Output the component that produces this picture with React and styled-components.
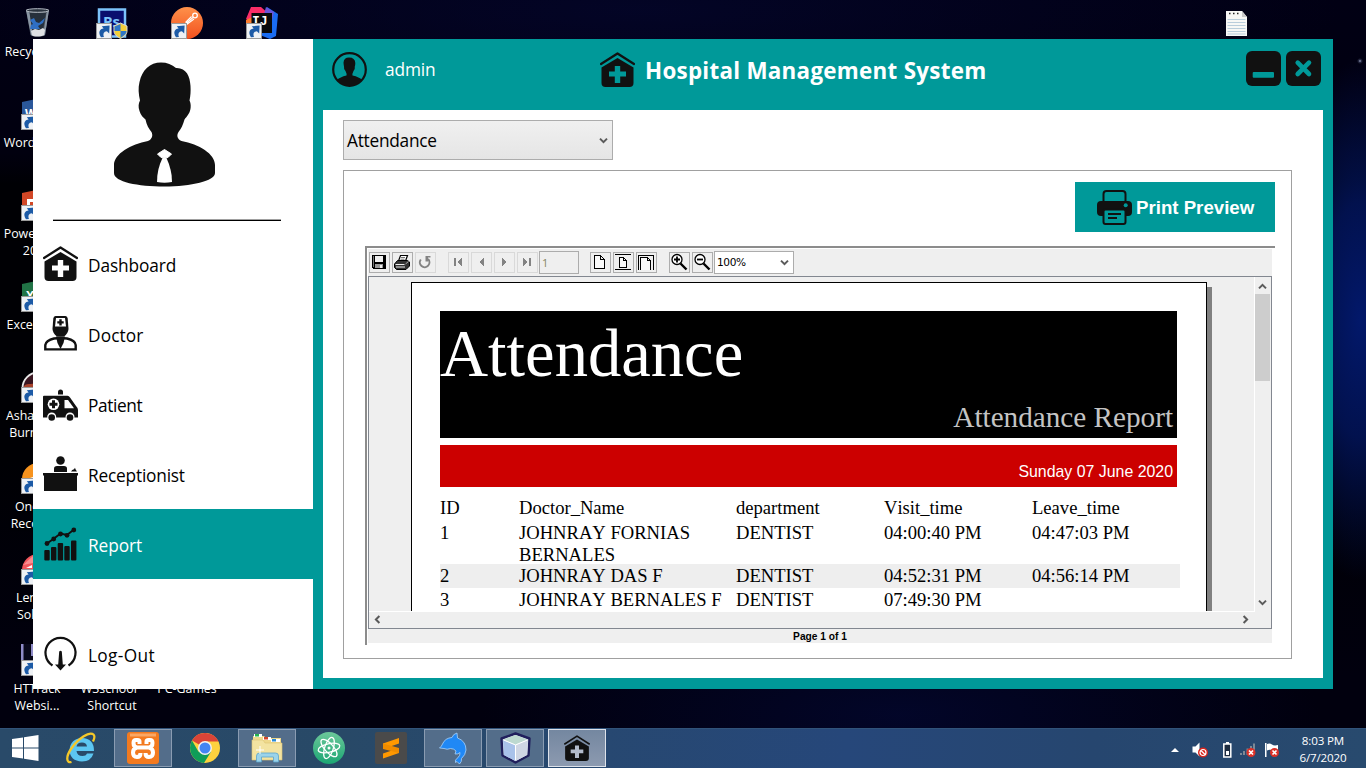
import React from "react";
import styled, { createGlobalStyle, css } from "styled-components";

const TEAL = "#009999";
const INK = "#111111";
const UI = `"Open Sans", "Noto Sans", sans-serif`;

const Global = createGlobalStyle`
  * { box-sizing: border-box; }
  html, body { margin: 0; padding: 0; background: #00000a; }
  svg { display: block; flex: none; }
`;

/* ---------- desktop ---------- */

const Desktop = styled.div`
  position: relative;
  width: 1366px;
  height: 768px;
  overflow: hidden;
  display: flex;
  flex-direction: column;
  padding: 39px 33px 0;
  font-family: ${UI};
  background:
    radial-gradient(circle at 1360px 61px, #9aa3c0 0, rgba(120,130,170,.3) 1.5px, transparent 3px),
    radial-gradient(ellipse 85px 260px at 1360px 320px, #02186a 0%, rgba(2, 19, 86, .9) 45%, transparent 100%),
    radial-gradient(ellipse 420px 130px at 900px 715px, rgba(3, 8, 52, .7), transparent 100%),
    radial-gradient(ellipse 700px 120px at 640px 10px, rgba(4, 6, 44, .75), transparent 100%),
    linear-gradient(180deg, #010014 0, #01000f 20%, #000004 24%, #000004 60%, #01000e 88%, #01000e 100%);
`;

const Shortcut = styled.div`
  position: absolute;
  left: ${(p) => p.$x}px;
  top: ${(p) => p.$y}px;
  width: 74px;
  display: flex;
  flex-direction: column;
  align-items: center;
`;

const Picture = styled.div`
  position: relative;
  width: 32px;
  height: 32px;
  margin-bottom: 4px;
`;

const Overlay = styled.div`
  position: absolute;
  left: 0;
  bottom: 0;
`;

const Caption = styled.div`
  font-size: 12.4px;
  line-height: 17px;
  color: #fff;
  text-align: center;
  white-space: pre;
  text-shadow: 0 1px 2px #000;
`;

const ArrowBadge = () => (
  <Overlay>
    <svg width="16" height="16" viewBox="0 0 16 16">
      <rect x=".5" y=".5" width="15" height="15" fill="#eef1f5" stroke="#9a9a9a" />
      <path d="M5 14.200C1.800 9.500 3.600 6 7.600 5.600L5.800 3.200 13.600 2.600 13.200 10.400 10.900 8.200C7.600 8.400 6.800 11 8 14Z" fill="#1c5aa6" />
    </svg>
  </Overlay>
);

const art = {
  bin: (
    <svg width="32" height="32" viewBox="0 0 32 32">
      <path d="M5 3h23l-4 25c-1 2-13 2-14.500 0Z" fill="#4b545f" />
      <path d="M8 6h17l-3 17H11Z" fill="#26303c" />
      <path d="M5 3l5 25 2 1L8.500 6Z M28 3l-4 25-2 1 3.500-23Z" fill="#8995a3" />
      <ellipse cx="16.500" cy="3.500" rx="11.500" ry="1.800" fill="#2a333e" stroke="#b5bcc5" />
      <path d="M9 13l4-2 2 4 3 1 6-5-2 5-5 3 2 3H9l1-4 2-1Z" fill="#2f6fc4" />
      <path d="M10 24l4-2 4 1 4-2 2 2-1 5c-3 2-11 2-12 0Z" fill="#dfe1e4" />
    </svg>
  ),
  ps: (
    <svg width="32" height="32" viewBox="0 0 32 32">
      <rect x="3" y="2.500" width="26" height="27" fill="#0a0e6e" stroke="#7cc3fb" strokeWidth="2.500" />
      <text x="7" y="20" fontFamily="Open Sans, sans-serif" fontWeight="700" fontSize="15" fill="#7cc3fb">Ps</text>
      <g transform="translate(17 16)">
        <path d="M7.500 0L14 3v5c0 4-4 6-6.500 7.500C5 14 1 12 1 8V3Z" fill="#f3cf3a" stroke="#dadada" />
        <path d="M7.500 1L1.500 3.400V8h6Z M7.500 8h6c0 3-3.500 5.500-6 6.800Z" fill="#2d76c8" />
      </g>
    </svg>
  ),
  postman: (
    <svg width="32" height="32" viewBox="0 0 32 32">
      <defs><linearGradient id="pm" x2="0" y2="1"><stop offset="0" stopColor="#ff914a" /><stop offset="1" stopColor="#f2501e" /></linearGradient></defs>
      <circle cx="16" cy="16" r="16" fill="url(#pm)" />
      <circle cx="24" cy="8.500" r="2.300" fill="none" stroke="#fff" strokeWidth="1.300" />
      <path d="M22 10.500l-8 7 M23 12l-8 6 M20.500 9.500l-6 6" stroke="#fff" strokeWidth="1.100" />
    </svg>
  ),
  idea: (
    <svg width="32" height="32" viewBox="0 0 32 32">
      <path d="M5 0h10l9 8-18 8-6-4Z" fill="#fb2d68" />
      <path d="M21 0l11 7-2 22-6 3-10-4Z" fill="#1a6cf2" />
      <path d="M20 0l8 5-2 8-8-6Z" fill="#6b55d8" />
      <path d="M0 13l6-3v10H0Z" fill="#fc7b2e" />
      <rect x="5.500" y="6" width="20.500" height="20" fill="#0a0a0a" />
      <text x="6" y="18" fontFamily="Liberation Mono, monospace" fontWeight="700" fontSize="13" fill="#fff">IJ</text>
    </svg>
  ),
  word: (<svg width="32" height="32" viewBox="0 0 32 32"><path d="M1 4L20 0v30L1 27Z" fill="#2a579a" /><text x="4" y="20" fontFamily="Open Sans" fontWeight="700" fontSize="12" fill="#fff">W</text></svg>),
  ppt: (<svg width="32" height="32" viewBox="0 0 32 32"><path d="M1 4L20 0v30L1 27Z" fill="#d24726" /><path d="M6 10h8v8H6Z" fill="#fff" /><path d="M9 13h3v3H9Z" fill="#d24726" /></svg>),
  excel: (<svg width="32" height="32" viewBox="0 0 32 32"><path d="M1 4L20 0v30L1 27Z" fill="#217346" /><text x="5" y="20" fontFamily="Open Sans" fontWeight="700" fontSize="12" fill="#fff">X</text></svg>),
  game: (<svg width="32" height="32" viewBox="0 0 32 32"><circle cx="17" cy="17" r="15.500" fill="#3a1520" stroke="#e8e8e8" strokeWidth="1.800" /><path d="M3 15c4-4 8 0 16-5v8H3Z" fill="#a8432c" /></svg>),
  rec: (<svg width="32" height="32" viewBox="0 0 32 32"><circle cx="17" cy="17" r="16" fill="#f7931e" /><path d="M9 16l6-2v3Z" fill="#fff" /></svg>),
  len: (<svg width="32" height="32" viewBox="0 0 32 32"><circle cx="17" cy="17" r="16" fill="#f2565c" /><path d="M2 12l10-9v7Z" fill="#f98d90" /><path d="M5 15l6-3v3Z" fill="#fff" /></svg>),
  httrack: (<svg width="32" height="32" viewBox="0 0 32 32"><rect width="32" height="32" fill="#08081a" /><path d="M0 0h2.500v18H0Z M10 0h3v12h-3Z" fill="#8f8cc8" /></svg>),
  note: (
    <svg width="22" height="27" viewBox="0 0 22 27">
      <path d="M0 1h16l5 6v19H0Z" fill="#f7f7f5" />
      <path d="M16 1l5 6h-5Z" fill="#c9c9c9" />
      <path d="M3 3.500h1.500M7 3.500h1.500M11 3.500h1.500" stroke="#222" strokeWidth="1.500" />
      <path d="M1.500 9.500h18M1.500 12.500h18M1.500 15.500h18M1.500 18.500h18M1.500 21.500h18M1.500 24h18" stroke="#b9cddb" />
    </svg>
  ),
};

const shortcuts = [
  { x: 0, y: 7, pic: "bin", plain: true, lines: ["Recycle Bin"] },
  { x: 75, y: 7, pic: "ps" },
  { x: 150, y: 7, pic: "postman" },
  { x: 225, y: 7, pic: "idea" },
  { x: 0, y: 98, pic: "word", lines: ["Word  2016"] },
  { x: 0, y: 189, pic: "ppt", lines: ["PowerPoint", "2016"] },
  { x: 0, y: 280, pic: "excel", lines: ["Excel 2016"] },
  { x: 0, y: 371, pic: "game", lines: ["Ashampoo", "Burning S"] },
  { x: 0, y: 462, pic: "rec", lines: ["OneClic", "Recorder"] },
  { x: 0, y: 553, pic: "len", lines: ["Lenovo", "Solutio"] },
  { x: 0, y: 644, pic: "httrack", lines: ["HTTrack", "Websi..."] },
  { x: 75, y: 644, lines: ["W3school  ", "Shortcut"] },
  { x: 150, y: 644, lines: ["PC-Games"] },
];

/* ---------- application window ---------- */

const Window = styled.div`
  position: relative;
  display: flex;
  width: 1300px;
  height: 650px;
  flex: none;
  background: ${TEAL};
`;

const Sidebar = styled.aside`
  width: 280px;
  display: flex;
  flex-direction: column;
  background: #fff;
`;

const Profile = styled.div`
  height: 190px;
  display: flex;
  flex-direction: column;
  padding: 23px 32px 8px 20px;
`;

const AvatarBox = styled.div`
  flex: 1;
  padding-left: 61px;
`;

const Rule = styled.div`
  height: 2px;
  border-top: 1px solid #a0a0a0;
  background: #000;
`;

const MenuItem = styled.div`
  height: 70px;
  display: flex;
  align-items: center;
  padding-left: 10px;
  gap: 10px;
  margin-top: ${(p) => p.$gap || 0}px;
  font-size: 17.3px;
  letter-spacing: ${(p) => p.$track || 0}px;
  color: ${(p) => (p.$active ? "#fff" : "#000")};
  background: ${(p) => (p.$active ? TEAL : "transparent")};
  svg { margin-top: -1px; }
  span { margin-top: 2px; }
`;

const Main = styled.main`
  flex: 1;
  display: flex;
  flex-direction: column;
  padding: 0 10px 11px;
`;

const Header = styled.header`
  height: 71px;
  display: flex;
  align-items: flex-start;
  padding: 13px 2px 0 9px;
  color: #fff;
`;

const UserName = styled.div`
  width: 233px;
  padding-left: 18px;
  line-height: 36px;
  font-size: 17.3px;
  letter-spacing: -0.15px;
`;

const Title = styled.h1`
  flex: 1;
  margin: 0;
  padding-left: 10px;
  line-height: 38px;
  font-size: 22.4px;
  letter-spacing: 0.27px;
  font-weight: 700;
  white-space: nowrap;
`;

const WindowButtons = styled.div`
  display: flex;
  gap: 5px;
  margin-top: -1px;
`;

const Content = styled.section`
  flex: 1;
  display: flex;
  flex-direction: column;
  padding: 10px 31px 19px 20px;
  background: #fff;
`;

const ReportSelect = styled.div`
  width: 270px;
  height: 40px;
  flex: none;
  display: flex;
  align-items: center;
  justify-content: space-between;
  padding: 1px 4px 0 3px;
  border: 1px solid #acacac;
  background: linear-gradient(#f0f0f0, #e5e5e5);
  font-size: 17.3px;
  letter-spacing: -0.25px;
  color: #000;
`;

const Panel = styled.div`
  flex: 1;
  margin-top: 10px;
  display: flex;
  flex-direction: column;
  padding: 11px 16px 13px 21px;
  border: 1px solid #a0a0a0;
`;

const PrintButton = styled.div`
  align-self: flex-end;
  width: 200px;
  height: 50px;
  flex: none;
  display: flex;
  align-items: center;
  padding-left: 22px;
  gap: 4px;
  background: ${TEAL};
  color: #fff;
  font: bold 18.67px "Liberation Sans", Arial, sans-serif;
  white-space: nowrap;
  span { margin-top: 2px; }
`;

const Viewer = styled.div`
  margin-top: 14px;
  height: 399px;
  display: flex;
  flex-direction: column;
  padding: 1px 3px 1px 1px;
  border-top: 2px solid #8c8c8c;
  border-left: 2px solid #8c8c8c;
`;

const Toolbar = styled.div`
  height: 27px;
  flex: none;
  display: flex;
  align-items: flex-start;
  gap: 2px;
  padding: 3px 0 0 1px;
  background: #efefef;
`;

const Tool = styled.div`
  width: 21px;
  height: 21px;
  margin-left: ${(p) => p.$gap || 0}px;
  display: flex;
  align-items: center;
  justify-content: center;
  border: 1px solid ${(p) => (p.$off ? "#d9d9d9" : "#adadad")};
  background: #efefef;
  color: ${(p) => (p.$off ? "#838383" : "#000")};
`;

const fieldBox = css`
  margin-top: -1px;
  height: 23px;
  border: 1px solid #acacac;
  font: 11px/21px "DejaVu Sans", sans-serif;
`;

const PageField = styled.div`
  ${fieldBox}
  width: 40px;
  margin-left: -1px;
  padding-left: 2px;
  background: #efefef;
  color: #85855f;
  font-family: ${UI};
`;

const ZoomField = styled.div`
  ${fieldBox}
  width: 80px;
  margin-left: -1px;
  padding: 0 4px 0 2px;
  display: flex;
  align-items: center;
  justify-content: space-between;
  background: #fff;
  font-size: 10.6px;
  letter-spacing: -0.4px;
`;

const Viewport = styled.div`
  height: 353px;
  flex: none;
  display: flex;
  flex-direction: column;
  border: 1px solid #828790;
  background: #efefef;
`;

const ViewRow = styled.div`
  display: flex;
  height: 335px;
`;

const Scroller = styled.div`
  width: 886px;
  height: 335px;
  overflow: hidden;
  padding: 5px 0 0 42px;
  border-right: 1px solid #fff;
  border-bottom: 1px solid #fff;
`;

const VBar = styled.div`
  flex: 1;
  display: flex;
  flex-direction: column;
  align-items: center;
  padding: 5px 1px 5px 0;
`;

const Thumb = styled.div`
  width: 15px;
  height: 87px;
  margin: 3px 0 auto;
  background: #cdcdcd;
`;

const HBar = styled.div`
  flex: 1;
  display: flex;
  justify-content: space-between;
  align-items: center;
  padding: 0 21px 1px 4px;
`;

const Footer = styled.div`
  height: 14px;
  background: #efefef;
  text-align: center;
  font: bold 10.2px/16px "Liberation Sans", Arial, sans-serif;
  color: #000;
`;

/* ---------- report sheet ---------- */

const Sheet = styled.div`
  width: 796px;
  height: 1123px;
  padding: 28px 26px 0 28px;
  background: #fff;
  border: 1px solid #000;
  box-shadow: 5px 5px 0 #808080;
  font-family: "Liberation Serif", "Times New Roman", serif;
  font-kerning: none;
`;

const Banner = styled.div`
  width: 737px;
  height: 127px;
  display: flex;
  flex-direction: column;
  justify-content: space-between;
  padding: 0 4px 4px 0;
  background: #000;
  color: #fff;
`;

const BannerTitle = styled.div`
  font-size: 66.6px;
  line-height: 86px;
  height: 86px;
`;

const BannerSub = styled.div`
  align-self: flex-end;
  font-size: 29.2px;
  line-height: 34px;
  color: #c4c4c4;
`;

const DateStrip = styled.div`
  width: 737px;
  height: 42px;
  margin-top: 7px;
  padding-right: 4px;
  background: #cc0000;
  color: #fff;
  text-align: right;
  font: 15.9px/53px "Liberation Sans", Arial, sans-serif;
`;

const Row = styled.div`
  width: 740px;
  height: ${(p) => p.$h}px;
  margin-top: ${(p) => p.$gap || 0}px;
  padding-top: ${(p) => p.$pad || 0}px;
  display: grid;
  grid-template-columns: 79px 217px 148px 148px 148px;
  font-size: 18.6px;
  line-height: 22px;
  color: #000;
  white-space: pre;
  background: ${(p) => (p.$alt ? "#eeeeee" : "transparent")};
`;

const rows = [
  { h: 24, gap: 10, cells: ["ID", "Doctor_Name", "department", "Visit_time", "Leave_time"] },
  { h: 43, pad: 1, cells: ["1", "JOHNRAY FORNIAS\nBERNALES", "DENTIST", "04:00:40 PM", "04:47:03 PM"] },
  { h: 24, pad: 1, alt: true, cells: ["2", "JOHNRAY DAS F", "DENTIST", "04:52:31 PM", "04:56:14 PM"] },
  { h: 24, pad: 1, cells: ["3", "JOHNRAY BERNALES F", "DENTIST", "07:49:30 PM", ""] },
];

/* ---------- application icons ---------- */

const Chevron = ({ dir = "down", size = 9 }) => {
  const turn = { down: 0, up: 180, left: 90, right: -90 }[dir];
  return (
    <svg width={size} height={size} viewBox="0 0 9 9">
      <path transform={`rotate(${turn} 4.5 4.500)`} d="M1 2.600L4.500 6.100 8 2.600" fill="none" stroke="#5a5a5a" strokeWidth="2" />
    </svg>
  );
};

const Hospital = ({ cross = "#fff", size = 35 }) => (
  <svg width={size} height={size} viewBox="0 0 35 35">
    <path d="M1 12L17.500 1.500 34 12" fill="none" stroke={INK} strokeWidth="2.300" strokeLinecap="round" strokeLinejoin="round" />
    <path d="M17.500 6L33.500 15.500V31q0 4-4 4H5.500q-4 0-4-4V15.500Z" fill={INK} />
    <path d="M14.800 14h5.400v5.600H26v5h-5.800V31h-5.400v-6.400H9v-5h5.800Z" fill={cross} />
  </svg>
);

const Avatar = () => (
  <svg width="101" height="126" viewBox="0 0 101 126">
    <path d="M47 .5C53 .5 58 2.500 62 6C72 5.500 76 14 76.500 24C76.800 29 76.500 34 75.500 38.500C77.500 42 77 49 74.500 52C73 54.500 71.500 56 70.500 57.500C69 63 67 67 64.500 70C62.500 73 63 77 67.500 79C85 82 101 92 101 103V111C101 119 77 124.500 50.500 124.500S0 120 0 111V103C0 92 17 82 34 79C38.500 77 39 73 37.500 70C35 67 32.500 63 31.500 57.500C29.500 56 26.500 53 25.500 49C24 45 24.500 41 26 38.500C24.500 32 24 26 25.500 20C28 8 36 .5 47 .5Z" fill={INK} />
    <path d="M50.500 87.500L57.500 92 54 95.500 50.500 96 47 95.500 43.500 92Z" fill="#fff" stroke="#fff" strokeLinejoin="round" />
    <path d="M48.500 96H52.500C56 104 58 111 58 120Q50.500 121.500 43 120C43 111 45 103 48.500 96Z" fill="#fff" />
  </svg>
);

const Doctor = () => (
  <svg width="35" height="35" viewBox="0 0 35 35">
    <path d="M12.500 0h10q2 0 2.200 2.500L25.500 13q-.5 5-4.500 7.500h-7Q10 18 9.500 13L10.300 2.500Q10.500 0 12.500 0Z" fill={INK} />
    <path d="M13 2h9l1 8.500H12Z" fill="#fff" />
    <path d="M16.300 3.200h2.400v2h2v2.400h-2v2h-2.400v-2h-2V5.200h2Z" fill={INK} />
    <path d="M2.300 33.400V29Q3 24.500 11 22.500L17.500 22 24 22.500Q32.300 24.500 32.700 29v4.400Z" fill="#fff" stroke={INK} strokeWidth="2.400" />
    <path d="M13 20.500h9l-1.500 6.500-3 6-3-6Z" fill={INK} />
  </svg>
);

const Ambulance = () => (
  <svg width="35" height="35" viewBox="0 0 35 35">
    <path d="M15 8.500V6a2.500 2.500 0 0 1 5 0v2.500Z" fill={INK} />
    <path d="M1 9.800h23.500Q26 10 27 11.500L33 20q2 2 2 4v7.500H0V10.800q0-1 1-1Z" fill={INK} />
    <circle cx="10.500" cy="18.300" r="5.800" fill="#fff" />
    <path d="M9 14.300h3v2.500h2.500v3H12v2.500H9v-2.500H6.500v-3H9Z" fill={INK} />
    <path d="M21.500 14h3.500L31 22.300h-9.500Z" fill="#fff" />
    <circle cx="8.700" cy="31" r="4.500" fill="#fff" /><circle cx="27" cy="31" r="4.500" fill="#fff" />
    <circle cx="8.700" cy="31.500" r="3.300" fill={INK} /><circle cx="27" cy="31.500" r="3.300" fill={INK} />
  </svg>
);

const Reception = () => (
  <svg width="35" height="35" viewBox="0 0 35 35">
    <circle cx="17.500" cy="4.500" r="4.300" fill={INK} />
    <path d="M11 16v-3.500Q11 10 14 10h7q3 0 3 2.500V16Z" fill={INK} />
    <path d="M28 15.500q1-2 3-2.300l1-1.400.5 1.500 1.500 2.200Z" fill={INK} />
    <path d="M0 17h35v2.500h-1V35H1V19.500H0Z" fill={INK} />
  </svg>
);

const Report = () => (
  <svg width="35" height="35" viewBox="0 0 35 35">
    <path d="M4 17.500L11 12.500 17.500 7.500 24 9 31 3.500" fill="none" stroke={INK} strokeWidth="2" />
    {[[4, 17.5], [10.7, 13], [17.5, 8], [24, 9.3], [30.8, 4]].map(([x, y]) => <circle key={x} cx={x} cy={y} r="2.400" fill={INK} />)}
    {[[1.3, 24], [8, 21], [14.7, 17], [21.3, 20], [28, 14.5]].map(([x, y]) => <rect key={x} x={x} y={y} width="5.400" height={34.5 - y} rx="1" fill={INK} />)}
  </svg>
);

const Logout = () => (
  <svg width="35" height="35" viewBox="0 0 35 35">
    <path d="M9.500 29.500A15 15 0 1 1 25.500 29.500" fill="none" stroke={INK} strokeWidth="2.200" />
    <path d="M16.200 15.500q1.300-1.500 2.600 0L19.800 28.500h3.200L17.500 34.500 12 28.500h3.200Z" fill={INK} />
  </svg>
);

const UserBadge = () => (
  <svg width="35" height="35" viewBox="0 0 35 35">
    <circle cx="17.500" cy="17.500" r="16.300" fill="none" stroke={INK} strokeWidth="2.200" />
    <path d="M17 5.500q6 0 6.300 5.500 0 2-.5 3.500.5 2-1.300 4.500-1.500 3-1 4.500 7 1.500 9.500 4.500-5 6-12.500 6T5 28q3-3 9.500-4.500.5-1.500-1-4.500-2-2.500-1.500-4.500Q11.500 12 11.500 10.500q.5-5 5.500-5Z" fill={INK} />
  </svg>
);

const Minimize = () => (
  <svg width="35" height="35" viewBox="0 0 35 35">
    <rect width="35" height="35" rx="6" fill={INK} />
    <rect x="6.700" y="21" width="21.300" height="5.700" rx="1" fill={TEAL} />
  </svg>
);

const Close = () => (
  <svg width="35" height="35" viewBox="0 0 35 35">
    <rect width="35" height="35" rx="6" fill={INK} />
    <path d="M11.700 11.700l11.300 11.300M23 11.700L11.700 23" stroke={TEAL} strokeWidth="4.600" strokeLinecap="round" />
  </svg>
);

const Printer = () => (
  <svg width="35" height="35" viewBox="0 0 35 35">
    <path d="M6.500 13V4q0-3 3-3h16q3 0 3 3v9" fill="none" stroke={INK} strokeWidth="2" />
    <path d="M4 11h27q4 0 4 4v7q0 4-4 4H4q-4 0-4-4v-7q0-4 4-4Z" fill={INK} />
    <rect x="6.500" y="19.500" width="22" height="14.500" rx="2" fill={TEAL} stroke={INK} strokeWidth="2" />
    <path d="M11 24h13M11 28h9" stroke={INK} strokeWidth="2.200" />
    <circle cx="28.700" cy="15.300" r="2" fill={TEAL} />
  </svg>
);

const menu = [
  { label: "Dashboard", Icon: Hospital, track: -0.1 },
  { label: "Doctor", Icon: Doctor, track: 0.1 },
  { label: "Patient", Icon: Ambulance, track: -0.4 },
  { label: "Receptionist", Icon: Reception, track: -0.2 },
  { label: "Report", Icon: Report, active: true, track: -0.1 },
  { label: "Log-Out", Icon: Logout, gap: 40, track: 0.35 },
];

/* ---------- viewer toolbar glyphs ---------- */

const Glyph = ({ children }) => (
  <svg width="19" height="19" viewBox="0 0 19 19" shapeRendering="crispEdges">{children}</svg>
);

const Save = () => (
  <Glyph>
    <path d="M2 2h14v14H3l-1-1Z" fill="#000" />
    <path d="M5 3h8v6H5Z" fill="#efefef" /><path d="M5 11h8v4H5Z" fill="#9a9a9a" /><path d="M10 12h2v3h-2Z" fill="#efefef" />
    <path d="M3 3h1v11H3Z" fill="#777" />
  </Glyph>
);
const Print = () => (
  <svg width="19" height="19" viewBox="0 0 19 19">
    <path d="M5.500 8L7.500 2.500h7L12.500 8" fill="#fff" stroke="#000" strokeWidth="1.200" />
    <path d="M1.500 11L4.500 7.500h10L16.500 9v4L13 16.500H3.500l-2-2Z" fill="#333" stroke="#000" />
    <path d="M2.500 11.500h9M3 14h9" stroke="#eee" /><path d="M8 4.500h4M7.500 6.200h4" stroke="#555" strokeWidth=".8" />
    <path d="M12.500 11l3-2.500" stroke="#aaa" />
  </svg>
);
const Reload = () => (
  <svg width="19" height="19" viewBox="0 0 19 19">
    <path d="M4.800 6.500A4.800 4.800 0 1 0 12 6" fill="none" stroke="currentColor" strokeWidth="2" />
    <path d="M9.500 3H14.500V4.500H12V8.500H9.500Z" fill="currentColor" />
  </svg>
);
const First = () => <Glyph><path d="M5 5h2v8H5Z" fill="currentColor" /><path d="M13 5v8L8 9Z" fill="currentColor" /></Glyph>;
const Prev = () => <Glyph><path d="M12 5v8L7 9Z" fill="currentColor" /></Glyph>;
const Next = () => <Glyph><path d="M7 5v8l5-4Z" fill="currentColor" /></Glyph>;
const Last = () => <Glyph><path d="M5 5v8l5-4Z" fill="currentColor" /><path d="M11 5h2v8h-2Z" fill="currentColor" /></Glyph>;
const ActualSize = () => <Glyph><path d="M3.500 2.500h6l4 4v9h-10Z M9.500 2.500v4h4" fill="#fafafa" stroke="#000" /></Glyph>;
const FitPage = () => <Glyph><path d="M1 1.500h16M1 16.500h16" stroke="#000" /><path d="M5.500 4.500h4l3 3v7h-7Z M9.500 4.500v3h3" fill="#fafafa" stroke="#000" /></Glyph>;
const FitWidth = () => <Glyph><path d="M1.500 17V2.500h15V17" fill="none" stroke="#000" /><path d="M3.500 17V4.500h7l3 3V17 M10.500 4.500v3h3" fill="#fafafa" stroke="#000" /></Glyph>;
const Lens = ({ plus }) => (
  <svg width="19" height="19" viewBox="0 0 19 19">
    <circle cx="7" cy="6.500" r="5" fill="#fff" stroke="#000" strokeWidth="1.300" />
    <path d={plus ? "M4 6.500h6M7 3.500v6" : "M4 6.500h6"} stroke="#000" strokeWidth="1.800" />
    <path d="M10.500 10.500l6 6" stroke="#000" strokeWidth="2.400" />
  </svg>
);

/* ---------- taskbar ---------- */

const Taskbar = styled.footer`
  height: 40px;
  flex: none;
  margin: 39px -33px 0;
  display: flex;
  justify-content: space-between;
  border-top: 1px solid #31537a;
  background: linear-gradient(90deg, #294a69 0, #284967 25%, #26477a 62%, #26466f 80%, #284a6e 100%);
`;

const TaskList = styled.div`
  display: flex;
  gap: 4px;
  padding-bottom: 1px;
`;

const Task = styled.div`
  width: ${(p) => p.$w || 58}px;
  margin-right: ${(p) => p.$pull || 0}px;
  display: flex;
  align-items: center;
  justify-content: center;
  border: 1px solid transparent;
  ${(p) => p.$open && css`border-color: #8a9cb2; background: #536d8a;`}
  ${(p) => p.$active && css`border-color: #dde2ea; background: linear-gradient(#7487a0, #8c9ab0);`}
`;

const Tray = styled.div`
  display: flex;
  align-items: center;
`;

const TrayIcons = styled.div`
  display: grid;
  grid-template-columns: 21px 30px 18px 24px 16px;
  align-items: center;
  margin-right: 19px;
  padding-top: 2px;
`;

const Clock = styled.div`
  width: 48px;
  margin-right: 19px;
  text-align: center;
  font-size: 11.6px;
  line-height: 17px;
  letter-spacing: -0.15px;
  white-space: nowrap;
  color: #fff;
`;

const Start = () => (
  <svg width="27" height="26" viewBox="0 0 27 26"><path d="M0 4l11-1.500v10H0Z M12 2.300L26.500 0v12.500H12Z M0 13.500h11v10L0 22Z M12 13.500h14.500V26L12 23.800Z" fill="#fff" /></svg>
);
const IE = () => (
  <svg width="32" height="32" viewBox="0 0 32 32">
    <path d="M29 19H11.500q.5 5 6 5 3.500 0 4.500-2.500h6.500Q26 29.500 17 29.500 5 29 4.500 18 5.500 6.500 17 6 29 6.500 29 19ZM11.500 14.500H22q-.5-4-5-4-4.800 0-5.500 4Z" fill="#5cc6f2" />
    <path d="M6.500 30C1.500 31.500.5 25 6 17 13 6.500 24.500-1 28.500 2.500c1.500 1.500 1 4-.5 7" fill="none" stroke="#f5c829" strokeWidth="2.300" />
  </svg>
);
const Xampp = () => (
  <svg width="32" height="32" viewBox="0 0 32 32">
    <rect width="32" height="32" rx="3" fill="#f37a1f" /><path d="M3 1.500h26v3H3Z" fill="#f9a765" />
    <path d="M12.500 12V9.500Q12.500 8 10.500 8H9Q6.500 8 6.500 11 6.500 15 10 15.500H22Q25.500 15 25.500 11 25.500 8 23 8H21.500Q19.500 8 19.500 9.500V12 M10 15.500Q6 16.500 6 20.500 6 25 10 25 13.500 25 13.500 21 M22 15.500Q26 16.500 26 20.500 26 25 22 25 18.500 25 18.500 21" fill="none" stroke="#fff" strokeWidth="4" strokeLinejoin="round" />
  </svg>
);
const Chrome = () => (
  <svg width="30" height="30" viewBox="0 0 30 30">
    <circle cx="15" cy="15" r="15" fill="#fdd23e" />
    <path d="M15 15L2 7.500A15 15 0 0 1 28.500 8.500H15Z" fill="#db4437" />
    <path d="M2 7.500A15 15 0 0 0 14 29.900L21 18.700 15 15 8.500 18.700Z" fill="#0f9d58" />
    <circle cx="15" cy="15" r="7" fill="#f1f1f1" /><circle cx="15" cy="15" r="5.500" fill="#4285f4" />
  </svg>
);
const Explorer = () => (
  <svg width="33" height="30" viewBox="0 0 33 30">
    <path d="M2 3h11l2 2h15v22H2Z" fill="#efd98c" /><path d="M3 1h8v3H3ZM12 4h8v3h-8ZM20 6h9v3h-9Z" fill="#fff" />
    <path d="M4 1h4v2.500H4Z" fill="#27b34b" /><path d="M13 4h4v2.500h-4Z" fill="#d2452c" /><path d="M21 6h4v2.500h-4Z" fill="#2a8bd6" />
    <path d="M1 7h11l2 3h17v17H1Z" fill="#f3e3a1" stroke="#dcc273" strokeWidth=".6" />
    <path d="M5.500 29V23q0-3 3-3h16q3 0 3 3v6h-5v-5h-12v5Z" fill="#9bd3ea" stroke="#5aa4cc" strokeWidth=".8" />
    <path d="M9 13v8M5 17h8" stroke="#fff" />
  </svg>
);
const Atom = () => (
  <svg width="32" height="32" viewBox="0 0 32 32">
    <defs><linearGradient id="at" x2="0" y2="1"><stop offset="0" stopColor="#6cc89a" /><stop offset="1" stopColor="#1ba673" /></linearGradient></defs>
    <circle cx="16" cy="16" r="16" fill="url(#at)" />
    <g fill="none" stroke="#fff" strokeWidth="1.300">
      {[-12, 48, 108].map((a) => <ellipse key={a} cx="16" cy="16" rx="11" ry="4.300" transform={`rotate(${a} 16 16)`} />)}
    </g>
    <circle cx="16" cy="16" r="1.500" fill="#fff" />
  </svg>
);
const Sublime = () => (
  <svg width="32" height="32" viewBox="0 0 32 32">
    <rect width="32" height="32" rx="2" fill="#4a4a4a" />
    <path d="M8 11.500L24 6v5.500L8 17Z M8 21.500L24 16v5L8 26.500Z" fill="#ff9800" /><path d="M8 11.500L24 16v5L8 17Z" fill="#f08c00" />
  </svg>
);
const Dolphin = () => (
  <svg width="28" height="33" viewBox="0 0 28 33">
    <path d="M.5 16Q2.500 14.500 3.500 12 6 6 13 5.500 14 2 18 1l.5 5Q27 9 27 18q-.5 5-4.500 8.500.5 3-2 5.500l-2.500-2.500-1.500 1Q15.500 28 18.500 26q3-2.500 2.500-5.500-2 2-5 1.500l1-3q-2-2.500-5.500-2.500Q8 18 5 16.500Z" fill="#2088f5" stroke="#a9d3fb" strokeWidth=".8" strokeLinejoin="round" />
  </svg>
);
const NetBeans = () => (
  <svg width="31" height="32" viewBox="0 0 31 32">
    <path d="M15.500 1.500L29.500 6.500 28.500 23.500 15.500 30.500 2.500 23.500 1.500 6.500Z" fill="#dfe7f0" stroke="#201f5c" strokeWidth="2.400" strokeLinejoin="round" />
    <path d="M3.500 7.500l12-4.500L27.500 7.500l-12 5Z" fill="#bdd9d0" /><path d="M3 8l12.500 5v16L4 23Z" fill="#a9c2ea" /><path d="M15.500 13L28 8l-1 15-11.500 6Z" fill="#cfd6e4" />
    <path d="M3.500 8l12 5 12-5M15.500 13v15" stroke="#fff" fill="none" />
  </svg>
);

const UpArrow = () => <svg width="8" height="4" viewBox="0 0 8 4"><path d="M0 4L4 0l4 4Z" fill="#fff" /></svg>;
const Speaker = () => (
  <svg width="16" height="16" viewBox="0 0 16 16">
    <path d="M.5 4.500h3l4-4v14l-4-4h-3Z" fill="#fff" /><circle cx="11" cy="10.500" r="5" fill="#d9251d" /><circle cx="11" cy="10.500" r="3" fill="none" stroke="#fff" strokeWidth="1.200" /><path d="M9 8.500l4 4" stroke="#fff" strokeWidth="1.200" />
  </svg>
);
const Battery = () => (
  <svg width="10" height="16" viewBox="0 0 10 16"><path d="M4 0h3v2H4Z" fill="#fff" /><rect x="1.800" y="2" width="7" height="13" fill="#1d2c40" stroke="#fff" strokeWidth="1.500" /><path d="M4 9h3v4H4Z" fill="#fff" /></svg>
);
const RedX = ({ x, y }) => (
  <g transform={`translate(${x} ${y})`}><circle r="4.500" fill="#dc3128" /><path d="M-2-2L2 2M2-2L-2 2" stroke="#fff" strokeWidth="1.700" /></g>
);
const Signal = () => (
  <svg width="16" height="16" viewBox="0 0 16 16"><path d="M0 11h2v2H0ZM3 9h2v4H3ZM6.500 6.500h2V13h-2ZM10 4h2v9h-2ZM13 1.500h2V13h-2Z" fill="#7d8995" /><RedX x={11} y={10.500} /></svg>
);
const Flag = () => (
  <svg width="16" height="16" viewBox="0 0 16 16"><path d="M1 1h1.500v14H1Z" fill="#fff" /><path d="M3 2q3-1 5 .5t6 .5v6q-4 1-6-.5T3 8.500Z" fill="#fff" /><RedX x={10.500} y={10.500} /></svg>
);

const tasks = [
  { Icon: Start, w: 50, pull: -2 },
  { Icon: IE },
  { Icon: Xampp, open: true },
  { Icon: Chrome },
  { Icon: Explorer, open: true },
  { Icon: Atom },
  { Icon: Sublime },
  { Icon: Dolphin, open: true },
  { Icon: NetBeans, open: true },
  { Icon: Hospital, open: true, active: true, props: { size: 26, cross: "#b3bccb" } },
];

export default function App() {
  return (
    <Desktop>
      <Global />
      {shortcuts.map((s, i) => (
        <Shortcut key={i} $x={s.x} $y={s.y}>
          <Picture>
            {s.pic && art[s.pic]}
            {s.pic && !s.plain && <ArrowBadge />}
          </Picture>
          {s.lines && s.lines.map((l) => <Caption key={l}>{l}</Caption>)}
        </Shortcut>
      ))}
      <Shortcut $x={1200} $y={10}>{art.note}</Shortcut>

      <Window>
        <Sidebar>
          <Profile>
            <AvatarBox><Avatar /></AvatarBox>
            <Rule />
          </Profile>
          {menu.map(({ label, Icon, active, gap, track }) => (
            <MenuItem key={label} $active={active} $gap={gap} $track={track}>
              <Icon />
              <span>{label}</span>
            </MenuItem>
          ))}
        </Sidebar>
        <Main>
          <Header>
            <UserBadge />
            <UserName>admin</UserName>
            <Hospital cross={TEAL} />
            <Title>Hospital Management System</Title>
            <WindowButtons><Minimize /><Close /></WindowButtons>
          </Header>
          <Content>
            <ReportSelect>Attendance<Chevron /></ReportSelect>
            <Panel>
              <PrintButton><Printer /><span>Print Preview</span></PrintButton>
              <Viewer>
                <Toolbar>
                  <Tool><Save /></Tool>
                  <Tool><Print /></Tool>
                  <Tool $off><Reload /></Tool>
                  <Tool $off $gap={10}><First /></Tool>
                  <Tool $off><Prev /></Tool>
                  <Tool $off><Next /></Tool>
                  <Tool $off><Last /></Tool>
                  <PageField>1</PageField>
                  <Tool $gap={9}><ActualSize /></Tool>
                  <Tool><FitPage /></Tool>
                  <Tool><FitWidth /></Tool>
                  <Tool $gap={10}><Lens plus /></Tool>
                  <Tool><Lens /></Tool>
                  <ZoomField>100%<Chevron /></ZoomField>
                </Toolbar>
                <Viewport>
                  <ViewRow>
                    <Scroller>
                      <Sheet>
                        <Banner>
                          <BannerTitle>Attendance</BannerTitle>
                          <BannerSub>Attendance Report</BannerSub>
                        </Banner>
                        <DateStrip>Sunday 07 June 2020</DateStrip>
                        {rows.map((r, i) => (
                          <Row key={i} $h={r.h} $gap={r.gap} $pad={r.pad} $alt={r.alt}>
                            {r.cells.map((c, j) => <div key={j}>{c}</div>)}
                          </Row>
                        ))}
                      </Sheet>
                    </Scroller>
                    <VBar><Chevron dir="up" /><Thumb /><Chevron /></VBar>
                  </ViewRow>
                  <HBar><Chevron dir="left" /><Chevron dir="right" /></HBar>
                </Viewport>
                <Footer>Page 1 of 1</Footer>
              </Viewer>
            </Panel>
          </Content>
        </Main>
      </Window>

      <Taskbar>
        <TaskList>
          {tasks.map(({ Icon, w, pull, open, active, props }, i) => (
            <Task key={i} $w={w} $pull={pull} $open={open} $active={active}><Icon {...props} /></Task>
          ))}
        </TaskList>
        <Tray>
          <TrayIcons><UpArrow /><Speaker /><Battery /><Signal /><Flag /></TrayIcons>
          <Clock>8:03 PM<br />6/7/2020</Clock>
        </Tray>
      </Taskbar>
    </Desktop>
  );
}
